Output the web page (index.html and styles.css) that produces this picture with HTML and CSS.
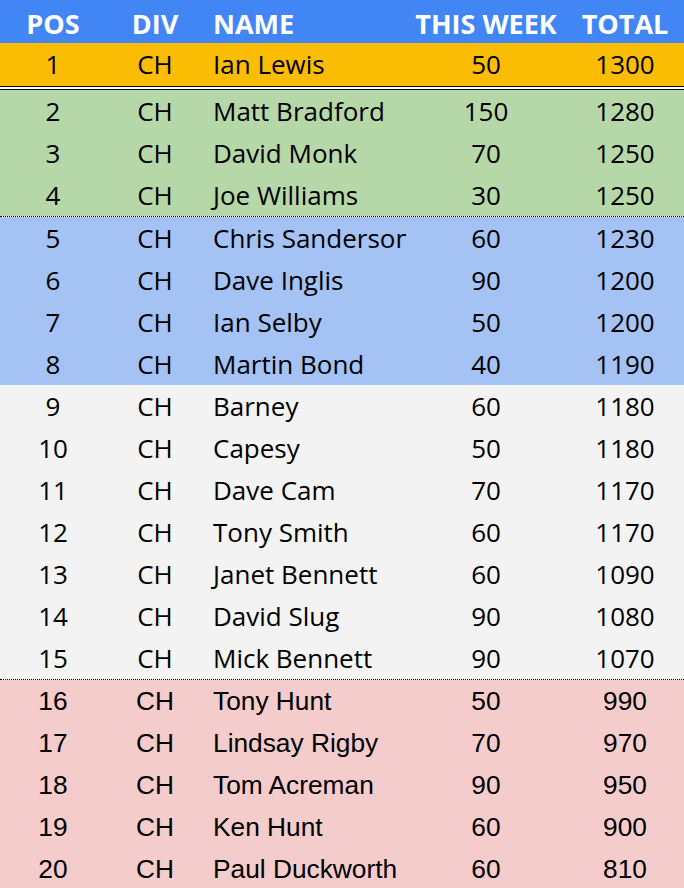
FILE: index.html
```html
<!DOCTYPE html>
<html>
<head>
<meta charset="utf-8">
<link rel="stylesheet" href="styles.css">
</head>
<body>
<div class="table">
  <div class="row head">
    <div class="c pos">POS</div><div class="c div">DIV</div><div class="c name">NAME</div><div class="c week">THIS WEEK</div><div class="c total">TOTAL</div>
  </div>
  <div class="row gold">
    <div class="c pos">1</div><div class="c div">CH</div><div class="c name">Ian Lewis</div><div class="c week">50</div><div class="c total">1300</div>
  </div>
  <div class="double"></div>
  <div class="row green"><div class="c pos">2</div><div class="c div">CH</div><div class="c name">Matt Bradford</div><div class="c week">150</div><div class="c total">1280</div></div>
  <div class="row green"><div class="c pos">3</div><div class="c div">CH</div><div class="c name">David Monk</div><div class="c week">70</div><div class="c total">1250</div></div>
  <div class="row green"><div class="c pos">4</div><div class="c div">CH</div><div class="c name">Joe Williams</div><div class="c week">30</div><div class="c total">1250</div></div>
  <div class="dotted"></div>
  <div class="row blue"><div class="c pos">5</div><div class="c div">CH</div><div class="c name">Chris Sanderson</div><div class="c week">60</div><div class="c total">1230</div></div>
  <div class="row blue"><div class="c pos">6</div><div class="c div">CH</div><div class="c name">Dave Inglis</div><div class="c week">90</div><div class="c total">1200</div></div>
  <div class="row blue"><div class="c pos">7</div><div class="c div">CH</div><div class="c name">Ian Selby</div><div class="c week">50</div><div class="c total">1200</div></div>
  <div class="row blue"><div class="c pos">8</div><div class="c div">CH</div><div class="c name">Martin Bond</div><div class="c week">40</div><div class="c total">1190</div></div>
  <div class="row grey"><div class="c pos">9</div><div class="c div">CH</div><div class="c name">Barney</div><div class="c week">60</div><div class="c total">1180</div></div>
  <div class="row grey"><div class="c pos">10</div><div class="c div">CH</div><div class="c name">Capesy</div><div class="c week">50</div><div class="c total">1180</div></div>
  <div class="row grey"><div class="c pos">11</div><div class="c div">CH</div><div class="c name">Dave Cam</div><div class="c week">70</div><div class="c total">1170</div></div>
  <div class="row grey"><div class="c pos">12</div><div class="c div">CH</div><div class="c name">Tony Smith</div><div class="c week">60</div><div class="c total">1170</div></div>
  <div class="row grey"><div class="c pos">13</div><div class="c div">CH</div><div class="c name">Janet Bennett</div><div class="c week">60</div><div class="c total">1090</div></div>
  <div class="row grey"><div class="c pos">14</div><div class="c div">CH</div><div class="c name">David Slug</div><div class="c week">90</div><div class="c total">1080</div></div>
  <div class="row grey"><div class="c pos">15</div><div class="c div">CH</div><div class="c name">Mick Bennett</div><div class="c week">90</div><div class="c total">1070</div></div>
  <div class="dotted"></div>
  <div class="row pink"><div class="c pos">16</div><div class="c div">CH</div><div class="c name">Tony Hunt</div><div class="c week">50</div><div class="c total">990</div></div>
  <div class="row pink"><div class="c pos">17</div><div class="c div">CH</div><div class="c name">Lindsay Rigby</div><div class="c week">70</div><div class="c total">970</div></div>
  <div class="row pink"><div class="c pos">18</div><div class="c div">CH</div><div class="c name">Tom Acreman</div><div class="c week">90</div><div class="c total">950</div></div>
  <div class="row pink"><div class="c pos">19</div><div class="c div">CH</div><div class="c name">Ken Hunt</div><div class="c week">60</div><div class="c total">900</div></div>
  <div class="row pink"><div class="c pos">20</div><div class="c div">CH</div><div class="c name">Paul Duckworth</div><div class="c week">60</div><div class="c total">810</div></div>
</div>
</body>
</html>
```
FILE: styles.css
```css
html, body {
  margin: 0;
  padding: 0;
  background: #ffffff;
}
.table {
  width: 684px;
  display: flex;
  flex-direction: column;
  font-family: "Open Sans", "Liberation Sans", sans-serif;
  font-size: 26px;
  color: #000;
}
.row {
  display: grid;
  grid-template-columns: 106px 98px 202px 160px 118px;
  height: 42px;
  align-items: center;
}
.c {
  text-align: center;
  white-space: nowrap;
  overflow: hidden;
  line-height: 42px;
}
.c.name {
  text-align: left;
  padding-left: 9px;
}
.head {
  box-sizing: border-box;
  height: 43px;
  padding-top: 4px;
  background: #4285f4;
  color: #fff;
  font-weight: 700;
  font-size: 27px;
}
.head .c { line-height: 39px; }
.gold {
  height: 43px;
  background: #fbbc04;
}
.gold .c { line-height: 43px; }
.double {
  height: 2px;
  border-top: 1px solid #000;
  border-bottom: 1px solid #000;
  background: #fff;
}
.dotted {
  height: 0;
  border-top: 1px dotted #000;
}
.green { background: #b6d7a8; }
.blue { background: #a4c2f4; }
.grey { background: #f3f3f3; }
.pink {
  background: #f4cccc;
  font-family: "Liberation Sans", Arial, sans-serif;
  font-size: 26.3px;
}
```
